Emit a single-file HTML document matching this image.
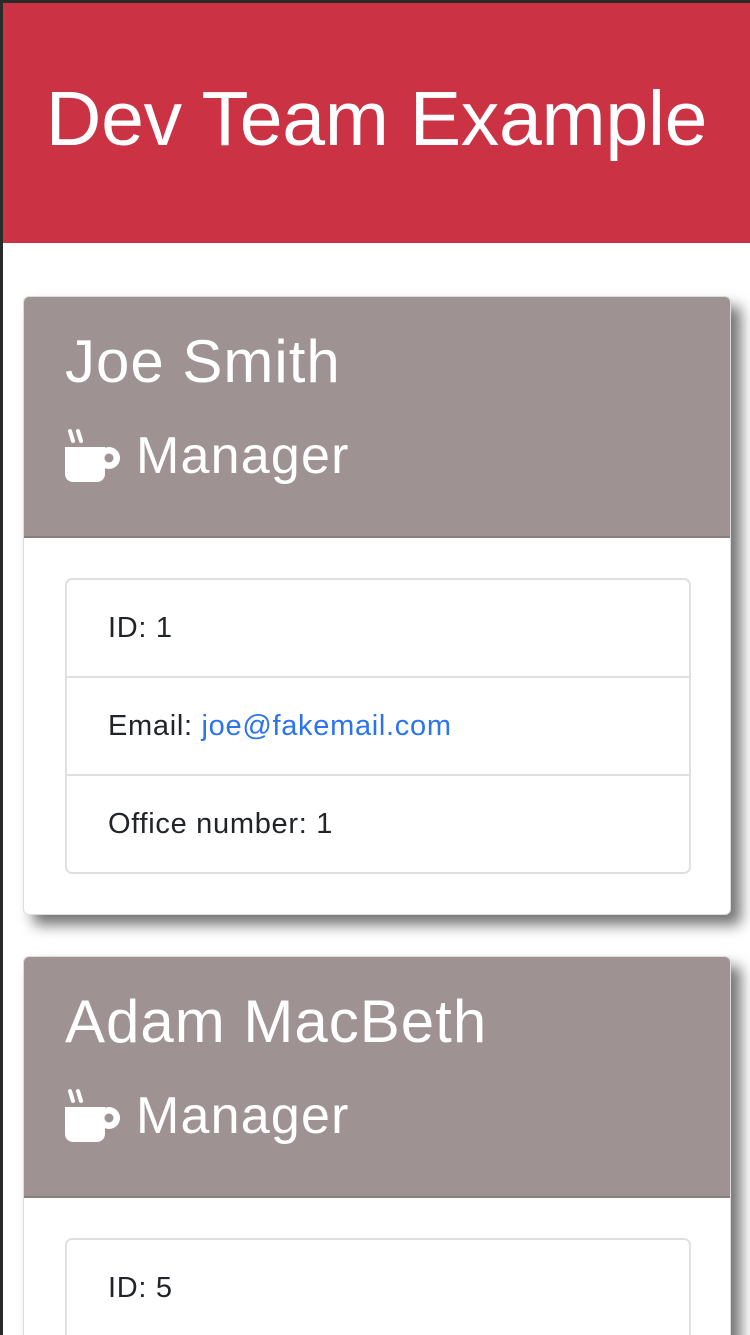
<!DOCTYPE html>
<html><head><style>
html,body{margin:0;padding:0;width:750px;height:1335px;overflow:hidden}
body{background:#fff;font-family:"Liberation Sans",sans-serif;position:relative;color:#212529}
.lb{position:absolute;left:0;top:0;width:3px;height:1335px;background:#2a2a2a;z-index:5}
.tb{position:absolute;left:0;top:0;width:750px;height:3px;background:#2a2a2a;z-index:5}
.hdr{position:absolute;left:3px;top:3px;width:747px;height:240px;background:#cb3244;color:#fff;font-size:77px;text-align:center;line-height:232px;letter-spacing:-0.3px}
.card{position:absolute;left:23px;width:706px;border:1px solid #ddd;border-radius:6px;background:#fff;box-shadow:10px 10px 14px rgba(0,0,0,.55);overflow:hidden}
.ch{background:#9e9292;height:239px;border-bottom:2px solid #8a7f7f;color:#fff;position:relative}
.name{position:absolute;left:41px;top:30px;font-size:60px;line-height:70px;letter-spacing:1px}
.role{position:absolute;left:112px;top:128px;font-size:52px;line-height:62px;letter-spacing:1.2px}
.cup{position:absolute;left:40px;top:130px}
.lg{position:absolute;left:41px;top:281px;width:622px;border:2px solid #e0e0e0;border-radius:7px}
.li{height:96px;line-height:96px;padding-left:41px;font-size:29px;letter-spacing:0.7px;border-top:2px solid #e0e0e0}
.li:first-child{border-top:none}
a{color:#2a74f0;text-decoration:none}
</style></head><body>
<div class="tb"></div><div class="lb"></div>
<div class="hdr">Dev Team Example</div>
<div class="card" style="top:296px;height:617px">
 <div class="ch"><div class="name">Joe Smith</div>
 <svg class="cup" width="58" height="56" viewBox="0 0 58 56"><path d="M6 4 L9 14 M14 4 L17 14" stroke="#fff" stroke-width="4" stroke-linecap="round"/><path d="M1 20 h40 v27 a8 8 0 0 1 -8 8 h-24 a8 8 0 0 1 -8 -8z" fill="#fff"/><circle cx="45" cy="31" r="11" fill="#fff"/><circle cx="45" cy="31" r="4.5" fill="#9e9292"/></svg>
 <div class="role">Manager</div></div>
 <div class="lg"><div class="li">ID: 1</div><div class="li">Email: <a>joe@fakemail.com</a></div><div class="li">Office number: 1</div></div>
</div>
<div class="card" style="top:956px;height:500px">
 <div class="ch"><div class="name">Adam MacBeth</div>
 <svg class="cup" width="58" height="56" viewBox="0 0 58 56"><path d="M6 4 L9 14 M14 4 L17 14" stroke="#fff" stroke-width="4" stroke-linecap="round"/><path d="M1 20 h40 v27 a8 8 0 0 1 -8 8 h-24 a8 8 0 0 1 -8 -8z" fill="#fff"/><circle cx="45" cy="31" r="11" fill="#fff"/><circle cx="45" cy="31" r="4.5" fill="#9e9292"/></svg>
 <div class="role">Manager</div></div>
 <div class="lg"><div class="li">ID: 5</div><div class="li">Email: <a>adam@fakemail.com</a></div></div>
</div>
</body></html>
